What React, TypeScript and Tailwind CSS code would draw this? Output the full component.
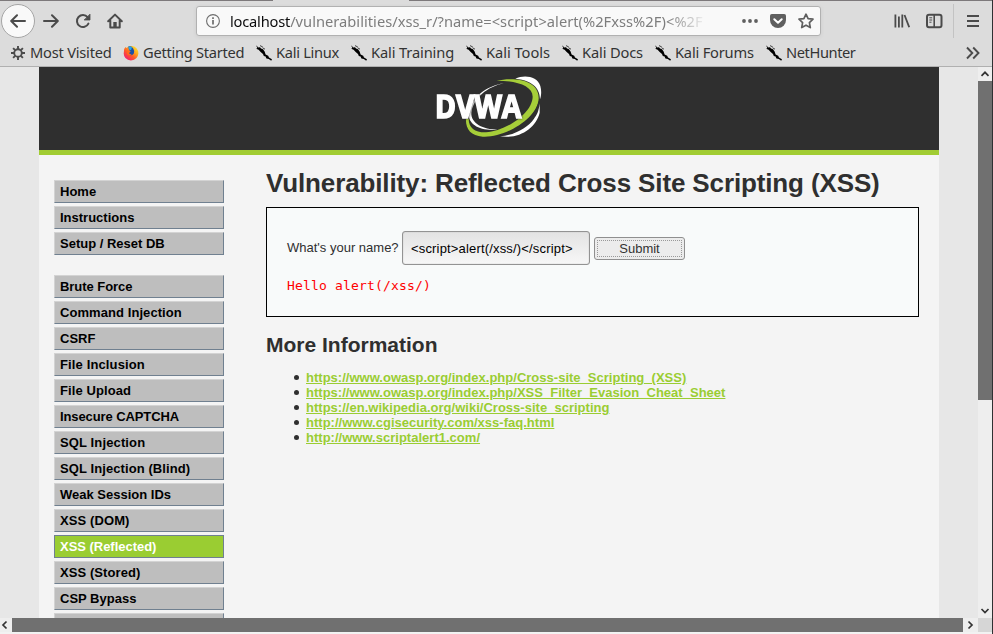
import { ReactNode } from "react";

const tools = [
  { label: "Home", cls: "" },
  { label: "Instructions", cls: "" },
  { label: "Setup / Reset DB", cls: "" },
];
const attacks = [
  { label: "Brute Force", cls: "tracking-[-0.05px]" },
  { label: "Command Injection", cls: "tracking-[0.07px]" },
  { label: "CSRF", cls: "" },
  { label: "File Inclusion", cls: "tracking-[0.13px]" },
  { label: "File Upload", cls: "tracking-[0.1px]" },
  { label: "Insecure CAPTCHA", cls: "tracking-[-0.1px]" },
  { label: "SQL Injection", cls: "tracking-[0.13px]" },
  { label: "SQL Injection (Blind)", cls: "tracking-[0.09px]" },
  { label: "Weak Session IDs", cls: "" },
  { label: "XSS (DOM)", cls: "tracking-[0.1px]" },
  { label: "XSS (Reflected)", cls: "tracking-[-0.03px]" },
  { label: "XSS (Stored)", cls: "tracking-[0.08px]" },
  { label: "CSP Bypass", cls: "" },
  { label: "", cls: "" },
];
const links = [
  "https://www.owasp.org/index.php/Cross-site_Scripting_(XSS)",
  "https://www.owasp.org/index.php/XSS_Filter_Evasion_Cheat_Sheet",
  "https://en.wikipedia.org/wiki/Cross-site_scripting",
  "http://www.cgisecurity.com/xss-faq.html",
  "http://www.scriptalert1.com/",
];

function Icon({ size = 16, children }: { size?: number; children: ReactNode }) {
  return (
    <svg
      width={size}
      height={size}
      viewBox="0 0 16 16"
      fill="none"
      stroke="#4b4b4b"
      strokeWidth="2"
      strokeLinecap="round"
      strokeLinejoin="round"
      className="block shrink-0"
    >
      {children}
    </svg>
  );
}

function Kali() {
  return (
    <svg width="16" height="16" viewBox="0 0 16 16" className="block shrink-0">
      <path
        d="M0 0.3 L2.4 2.6 L4 2.2 L5 3.6 L7 4.2 L8.6 6.4 L9.6 9.6 L12.2 10.8 L13 12.6 L16 14.2 L15.2 15.8 L12.8 14 L10.4 13.6 L9.6 11.6 L7.8 11 L7 9 L4.4 6.8 L2.6 4.8 L0.2 3.8 L1.4 3 Z"
        fill="#000"
      />
      <path d="M4 0.6 L6.8 2 M6.6 2.8 L9 4.2" stroke="#000" strokeWidth="0.7" />
    </svg>
  );
}

function Firefox() {
  return (
    <svg width="16" height="16" viewBox="0 0 16 16" className="block shrink-0">
      <defs>
        <linearGradient id="fx" x1="1" y1="0" x2="0.15" y2="1">
          <stop offset="0" stopColor="#fff044" />
          <stop offset="0.35" stopColor="#ffb01f" />
          <stop offset="0.62" stopColor="#ff5a28" />
          <stop offset="1" stopColor="#f0127c" />
        </linearGradient>
      </defs>
      <path d="M1.2 4 L2.5 2 L3.6 3 Q5.5 0.6 9 1 Q15.2 2 15.4 8.6 Q14.8 15 8 15.4 Q1 15 .7 8.5 Z" fill="url(#fx)" />
      <path d="M5.4 1.6 Q8.4 0.6 10.2 3.4 Q12 6 10.8 8.6 Q9.4 10.6 7 10 Q4.6 9.2 5 7.6 L7.6 7 L6 4.8 Z" fill="#1b4fa8" />
      <path d="M5.4 1.6 Q7.6 1 9 2.2 L8 5.2 L6 4.6 Z" fill="#2aa6e8" />
      <path d="M4.4 5 L7.6 6.6 L6 8 Q6.6 9.6 9 8.8 Q7.8 10.8 5 10 Q3 8 4.4 5 Z" fill="#ff6a1c" />
    </svg>
  );
}

function Gear() {
  return (
    <svg width="14" height="14" viewBox="-7 -7 14 14" fill="none" stroke="#4b4b4b" className="block shrink-0">
      <circle r="3.8" strokeWidth="1.9" />
      <path
        d="M0 -4V-7M0 4V7M-4 0H-7M4 0H7M2.9 -2.9L4.9 -4.9M-2.9 -2.9L-4.9 -4.9M2.9 2.9L4.9 4.9M-2.9 2.9L-4.9 4.9"
        strokeWidth="1.9"
      />
    </svg>
  );
}

function Bookmark({ icon, label, cls }: { icon: ReactNode; label: string; cls: string }) {
  return (
    <div className={"flex shrink-0 items-center gap-1 whitespace-nowrap " + cls}>
      {icon}
      <span className="mb-[3px]">{label}</span>
    </div>
  );
}

function Chevron({ d }: { d: string }) {
  return (
    <svg width="14" height="14" viewBox="0 0 14 14" fill="none" stroke="#333" strokeWidth="1.7" className="block shrink-0">
      <path d={d} />
    </svg>
  );
}

function Logo() {
  return (
    <svg width="110" height="64" viewBox="102 27 330 192" className="block">
      <path d="M346 38 C372 26 412 30 421 60 C425 74 424 90 420 100 C420 72 404 44 346 38 Z" fill="#fff" />
      <path d="M419 140 C408 186 358 220 300 211 C346 207 384 184 402 158 C410 148 416 138 419 112 Z" fill="#fff" />
      <path
        d="M290 44 C345 32 418 42 416 98 C412 160 310 216 248 212 C212 210 196 188 198 158 L206 158 C206 186 226 200 258 199 C312 196 396 146 398 92 C398 60 350 44 290 44 Z"
        fill="#a6ce39"
      />
      <path d="M418 106 C411 140 380 172 348 188" stroke="#2f2f2f" strokeWidth="4" fill="none" />
      <path d="M312 52 C262 62 220 96 214 140 C212 172 250 190 292 191 C240 196 204 176 206 142 C210 96 262 58 312 52 Z" fill="#fff" />
      <text
        x="105"
        y="157"
        fontSize="97"
        textLength="259"
        lengthAdjust="spacingAndGlyphs"
        fill="#fff"
        stroke="#fff"
        strokeWidth="5"
        className="font-['Open_Sans',sans-serif] font-bold drop-shadow-[0_0_3px_#2f2f2f]"
      >
        DVWA
      </text>
    </svg>
  );
}

function MenuItem({ label, cls }: { label: string; cls: string }) {
  const active = label === "XSS (Reflected)";
  return (
    <li
      className={
        "mb-[3px] h-[23px] shrink-0 border pl-[5px] text-[13px] leading-[21px] font-bold whitespace-nowrap " +
        (active
          ? "border-[#708090] bg-[#9acd32] text-white "
          : "border-t-[#d3d3d3] border-r-[#708090] border-b-[#708090] border-l-[#d3d3d3] bg-[#bebebe] text-black ") +
        cls
      }
    >
      {label}
    </li>
  );
}

export default function App() {
  return (
    <div className="flex h-[634px] w-[993px] overflow-hidden bg-[#2f3133] font-['Liberation_Sans',Arial,sans-serif]">
      <div className="flex w-[992px] shrink-0 flex-col bg-[#f2f2f2]">
        <header className="flex h-[67px] shrink-0 flex-col border-b border-[#b0b0b0] bg-[#dcdcdc] font-['Noto_Sans',sans-serif] text-[14.67px] text-[#333]">
          <div className="flex h-px shrink-0">
            <div className="w-[273px] bg-[#7d797b]" />
            <div className="w-[136px]" />
            <div className="flex-1 bg-[#7d797b]" />
          </div>
          <div className="flex h-10 shrink-0 items-center">
            <div className="ml-px flex h-[34px] w-[34px] shrink-0 items-center justify-center rounded-full border border-[#a5a5a5] bg-[#f9f9f9]">
              <Icon>
                <path d="M15 8H1.5M7 2.2L1.2 8L7 13.8" />
              </Icon>
            </div>
            <div className="ml-2 flex gap-4">
              <Icon>
                <path d="M1 8H14.5M9 2.2L14.8 8L9 13.8" />
              </Icon>
              <Icon>
                <path d="M13.4 10.6A6 6 0 1 1 12.6 4.2" />
                <path d="M15 1.5V7H9.5Z" fill="#4b4b4b" strokeWidth="0.8" />
              </Icon>
              <Icon>
                <path d="M1.2 8.2L8 1.6L14.8 8.2M3.3 7.5V14.6H12.7V7.5" />
                <path d="M8 9V14" strokeWidth="3.4" strokeLinecap="butt" />
              </Icon>
            </div>
            <div className="ml-[73px] flex h-[30px] w-[625px] shrink-0 items-center rounded-[3px] border border-[#b1b1b1] bg-[#f9f9f9] shadow-[0_1px_4px_rgba(0,0,0,0.07)]">
              <svg width="14" height="14" viewBox="0 0 14 14" fill="none" stroke="#6d6d6d" className="ml-[9px] shrink-0">
                <circle cx="7" cy="7" r="6.4" strokeWidth="1.1" />
                <path d="M7 6V10.6M7 3.2V4.9" strokeWidth="1.7" />
              </svg>
              <div className="ml-[10px] w-[476px] overflow-hidden mask-r-from-[437px] mask-r-to-[477px] tracking-[0.02px] whitespace-nowrap text-[#7d7d7d]">
                <span className="tracking-[-0.2px] text-[#0c0c0d]">localhost</span>
                {"/vulnerabilities/xss_r/?name=<script>alert(%2Fxss%2F)<%2F"}
              </div>
              <svg width="16" height="16" viewBox="0 0 16 16" className="ml-9 shrink-0" fill="#5f5f5f">
                <circle cx="2" cy="8" r="1.9" />
                <circle cx="8" cy="8" r="1.9" />
                <circle cx="14" cy="8" r="1.9" />
              </svg>
              <svg width="16" height="16" viewBox="0 0 16 16" className="ml-3 shrink-0" fill="none">
                <path d="M1.8 1H14.2Q16 1 16 2.8V7A8 8 0 0 1 0 7V2.8Q0 1 1.8 1Z" fill="#5f5f5f" />
                <path d="M4.3 6.2L8 9.7L11.7 6.2" stroke="#fff" strokeWidth="2" strokeLinecap="round" strokeLinejoin="round" />
              </svg>
              <svg width="16" height="16" viewBox="0 0 16 16" className="ml-3 shrink-0" fill="none">
                <path
                  d="M8 1.2L10.1 5.6L15 6.2L11.4 9.6L12.3 14.6L8 12.2L3.7 14.6L4.6 9.6L1 6.2L5.9 5.6Z"
                  stroke="#5f5f5f"
                  strokeWidth="1.7"
                  strokeLinejoin="round"
                />
              </svg>
            </div>
            <svg width="16" height="16" viewBox="0 0 16 16" className="ml-[73px] shrink-0" stroke="#4b4b4b" strokeWidth="1.8">
              <path d="M1.4 1.5V14.5M4.9 3.5V14.5M8.3 1.5V14.5M10.5 2L15.2 14.3" />
            </svg>
            <svg width="17" height="16" viewBox="0 0 17 16" className="ml-4 shrink-0" fill="none" stroke="#4b4b4b">
              <rect x="1" y="1.8" width="14.5" height="12.4" rx="2" strokeWidth="2" />
              <path d="M8.2 2V14" strokeWidth="1.6" />
              <path d="M3.3 4.8H6.2M3.3 7H6.2M3.3 9.2H5.5" strokeWidth="1" />
            </svg>
            <div className="ml-[10px] h-[34px] w-px bg-[#c3c3c3]" />
            <svg width="12" height="16" viewBox="0 0 12 16" className="ml-[13px] shrink-0" stroke="#4b4b4b" strokeWidth="2">
              <path d="M0 3H12M0 8H12M0 13H12" />
            </svg>
          </div>
          <div className="flex h-6 shrink-0 items-center">
            <Bookmark icon={<Gear />} label="Most Visited" cls="ml-[11px] w-[112px] gap-[5px] tracking-[-0.22px]" />
            <Bookmark icon={<Firefox />} label="Getting Started" cls="w-[133px] tracking-[-0.28px]" />
            <Bookmark icon={<Kali />} label="Kali Linux" cls="w-[95px] tracking-[-0.3px]" />
            <Bookmark icon={<Kali />} label="Kali Training" cls="w-[115px] tracking-[-0.13px]" />
            <Bookmark icon={<Kali />} label="Kali Tools" cls="w-[96px] tracking-[-0.03px]" />
            <Bookmark icon={<Kali />} label="Kali Docs" cls="w-[93px] tracking-[-0.15px]" />
            <Bookmark icon={<Kali />} label="Kali Forums" cls="w-[111px] tracking-[-0.2px]" />
            <Bookmark icon={<Kali />} label="NetHunter" cls="w-[200px] tracking-[-0.42px]" />
            <svg width="14" height="14" viewBox="0 0 14 14" fill="none" stroke="#4b4b4b" strokeWidth="1.9">
              <path d="M1 1.5L6.3 7L1 12.5M7.2 1.5L12.5 7L7.2 12.5" />
            </svg>
          </div>
        </header>

        <div className="flex h-[551px] shrink-0">
          <div className="w-[978px] overflow-hidden bg-[#e7e7e7] pl-[39px]">
            <div className="flex h-full w-[900px] flex-col bg-[#f4f4f4]">
              <div className="flex h-[88px] shrink-0 justify-center border-b-[5px] border-[#a1cc33] bg-[#2f2f2f] pt-2">
                <Logo />
              </div>
              <div className="flex min-h-0 flex-1">
                <nav className="ml-[15px] w-[170px] shrink-0 overflow-hidden pt-[25px]">
                  <ul className="mb-5">
                    {tools.map((t) => (
                      <MenuItem key={t.label} {...t} />
                    ))}
                  </ul>
                  <ul>
                    {attacks.map((t) => (
                      <MenuItem key={t.label} {...t} />
                    ))}
                  </ul>
                </nav>
                <main className="ml-[42px] w-[653px] shrink-0 text-[13px] text-[#2f2f2f]">
                  <h1 className="pt-[13px] text-[26px] leading-[30px] font-bold tracking-[-0.13px] whitespace-nowrap">
                    Vulnerability: Reflected Cross Site Scripting (XSS)
                  </h1>
                  <div className="mt-[9px] h-[110px] border border-black bg-[#f8fafa] pt-[23px] pl-5">
                    <div className="flex items-center whitespace-nowrap">
                      <label className="w-[115px]">What's your name?</label>
                      <div className="flex h-[34px] w-[188px] items-center rounded-[3px] border border-[#939393] bg-linear-to-b from-[#e3e3e3] to-[#f7f7f7] pt-0.5 pl-2 tracking-[0.17px] text-black shadow-[inset_0_0_1px_#999]">
                        {"<script>alert(/xss/)</script>"}
                      </div>
                      <button className="ml-1 flex h-[23px] w-[91px] rounded-[3px] border border-[#8f8f8f] bg-[#ececec] p-[2px] text-[#333]">
                        <span className="flex h-full flex-1 items-center justify-center border border-dotted border-[#999] pt-px">
                          Submit
                        </span>
                      </button>
                    </div>
                    <pre className="mt-[13px] font-['DejaVu_Sans_Mono',monospace] text-[13px] leading-[15px] tracking-[0.17px] text-[#f00]">
                      Hello alert(/xss/)
                    </pre>
                  </div>
                  <h2 className="mt-4 text-[21px] leading-6 font-bold">More Information</h2>
                  <ul className="mt-[13px] pl-[28px] leading-[15px] font-bold">
                    {links.map((l) => (
                      <li key={l} className="flex items-center tracking-[0.015px] whitespace-nowrap">
                        <span className="mr-[7px] h-[5px] w-[5px] rounded-full bg-[#2f2f2f]" />
                        <a className="text-[#9acd32] underline">{l}</a>
                      </li>
                    ))}
                  </ul>
                </main>
              </div>
            </div>
          </div>
          <div className="flex w-[14px] shrink-0 flex-col bg-[#eeeeee]">
            <Chevron d="M3.5 8.8L7 5.3L10.5 8.8" />
            <div className="h-[319px] bg-[#707070]" />
            <div className="mt-auto">
              <Chevron d="M3.5 5L7 8.5L10.5 5" />
            </div>
          </div>
        </div>
        <div className="flex h-[14px] shrink-0 bg-[#eeeeee]">
          <div className="w-3 overflow-hidden">
            <Chevron d="M6.5 3.5L3 7L6.5 10.5" />
          </div>
          <div className="w-[951px] bg-[#707070]" />
          <div className="w-[15px]">
            <Chevron d="M5.5 3.5L9 7L5.5 10.5" />
          </div>
          <div className="w-[14px] bg-[#d6d6d6]" />
        </div>
      </div>
    </div>
  );
}
